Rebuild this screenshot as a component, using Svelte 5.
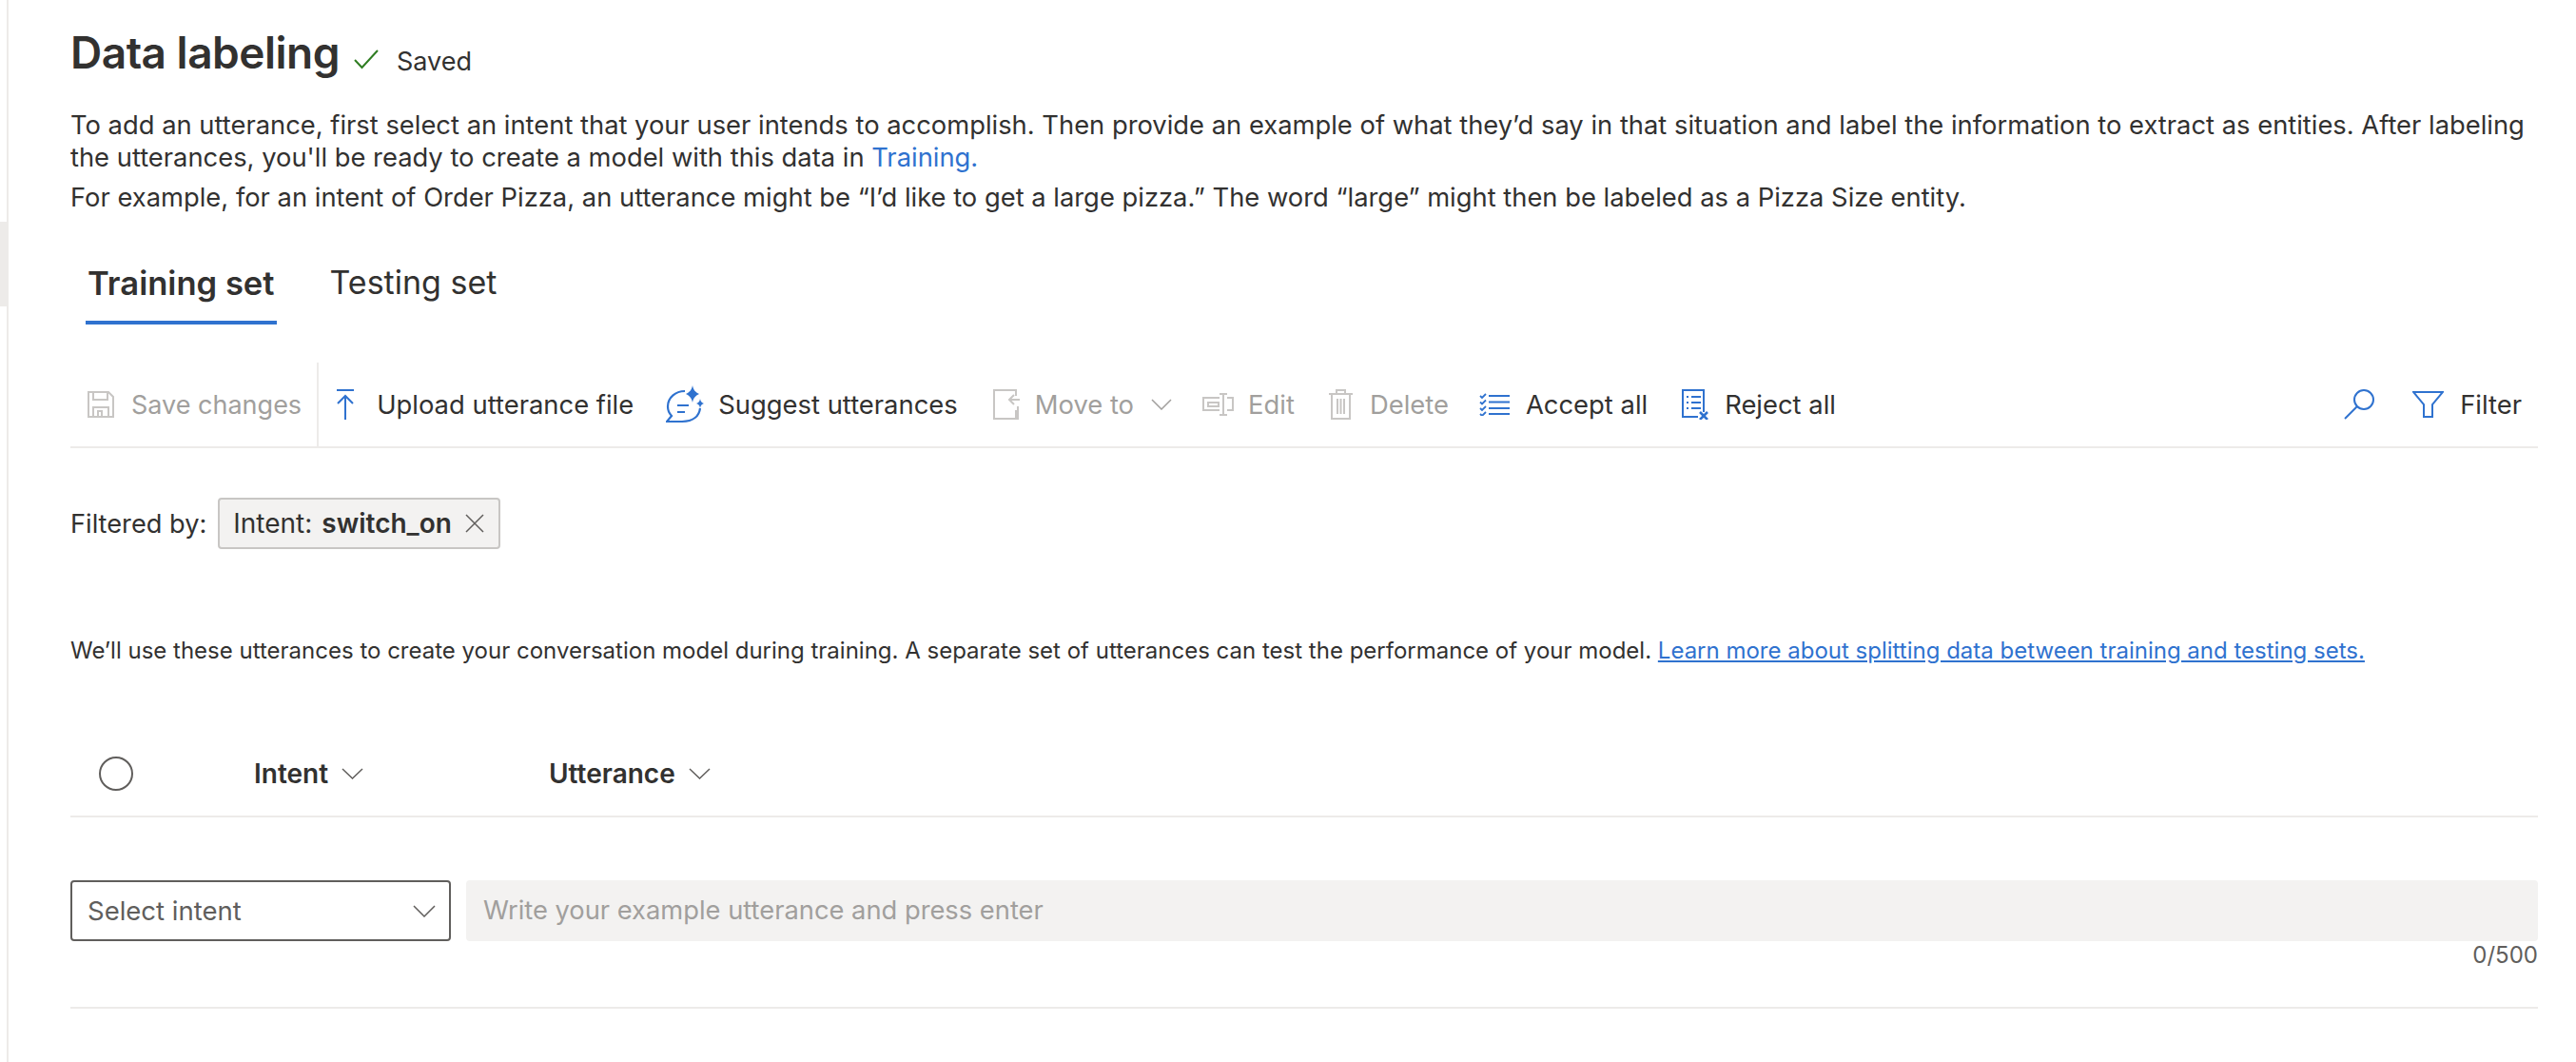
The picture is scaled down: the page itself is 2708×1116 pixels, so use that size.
<script lang="ts">
  const headline = 'To add an utterance, first select an intent that your user intends to accomplish. Then provide an example of what they’d say in that situation and label the information to extract as entities. After labeling the utterances, you\'ll be ready to create a model with this data in ';
  const example = 'For example, for an intent of Order Pizza, an utterance might be “I’d like to get a large pizza.” The word “large” might then be labeled as a Pizza Size entity.';
</script>

<div class="page">
  <aside class="rail"><div class="rail-mark"></div></aside>

  <main class="content">
    <header class="title-row">
      <h1>Data labeling</h1>
      <svg class="check" width="26" height="22" viewBox="0 0 26 22" fill="none"><path d="M1 12L8.5 20L25 2" stroke="#2f7d22" stroke-width="2"/></svg>
      <span class="saved">Saved</span>
    </header>

    <p class="intro">{headline}<a href="#training">Training.</a></p>
    <p class="intro second">{example}</p>

    <nav class="tabs">
      <div class="tab active">Training set</div>
      <div class="tab">Testing set</div>
    </nav>

    <div class="toolbar">
      <div class="btn disabled save">
        <svg width="28" height="28" viewBox="0 0 28 28" fill="none" stroke="#c8c6c4" stroke-width="2"><path d="M1 1H22L27 6V27H1Z"/><path d="M6 1V9H21V1"/><path d="M6 27V17H22V27"/><path d="M11 27V21H15V27"/></svg>
        <span>Save changes</span>
      </div>
      <div class="btn upload">
        <svg width="18" height="32" viewBox="0 0 18 32" fill="none" stroke="#2f72cf" stroke-width="2"><path d="M0 1H18"/><path d="M9 32V8"/><path d="M1 15L9 7L17 15"/></svg>
        <span>Upload utterance file</span>
      </div>
      <div class="btn suggest">
        <svg width="40" height="40" viewBox="0 0 40 40" fill="none"><path d="M20 6C10 6 2 13 2 22C2 26 3 29 6 32L1 38H17C29 38 35 32 36 24" stroke="#2f72cf" stroke-width="2.2"/><path d="M12 21H24M12 28H20" stroke="#2f72cf" stroke-width="2.2"/><path d="M28 0C29 5 31 7 35 9C31 11 29 13 28 18C27 13 25 11 21 9C25 7 27 5 28 0Z" fill="#2f72cf"/><path d="M36 14C36.500 17 37.500 18 40 19C37.500 20 36.500 21 36 24C35.500 21 34.500 20 32 19C34.500 18 35.500 17 36 14Z" fill="#2f72cf"/></svg>
        <span>Suggest utterances</span>
      </div>
      <div class="btn disabled move">
        <svg width="28" height="32" viewBox="0 0 28 32" fill="none" stroke="#c8c6c4" stroke-width="2"><path d="M24 7V1H1V31H26V18"/><path d="M28 11H18M22 6L17 11L22 16"/><path d="M24 22V31"/></svg>
        <span>Move to</span>
        <svg class="chev" width="22" height="12" viewBox="0 0 22 12" fill="none" stroke="#a19f9d" stroke-width="1.500"><path d="M1 1L11 11L21 1"/></svg>
      </div>
      <div class="btn disabled edit">
        <svg width="33" height="24" viewBox="0 0 33 24" fill="none" stroke="#c8c6c4" stroke-width="2"><path d="M18 5H1V18H18"/><path d="M6 10H17V14H6Z"/><path d="M26 5H32V18H26"/><path d="M18 1H26M22 1V23M18 23H26"/></svg>
        <span>Edit</span>
      </div>
      <div class="btn disabled delete">
        <svg width="25" height="32" viewBox="0 0 25 32" fill="none" stroke="#c8c6c4" stroke-width="2"><path d="M0 5H25"/><path d="M8 5V1H17V5"/><path d="M3 5V31H22V5"/><path d="M9 10V26M12.500 10V26M16 10V26"/></svg>
        <span>Delete</span>
      </div>
      <div class="btn accept">
        <svg width="32" height="24" viewBox="0 0 32 24" fill="none" stroke="#2f72cf"><path d="M1 3L3 5L7 1M1 9.500L3 11.500L7 7.500M1 16L3 18L7 14M1 22L3 24L7 20" stroke-width="1.800"/><path d="M10 3H32M10 9.500H32M10 16H32M10 22H32" stroke-width="2"/></svg>
        <span>Accept all</span>
      </div>
      <div class="btn reject">
        <svg width="28" height="32" viewBox="0 0 28 32" fill="none" stroke="#2f72cf"><path d="M23 24V1H1V29H17" stroke-width="2"/><path d="M5 8H7M10 8H20M5 14H7M10 14H20M5 20H7M10 20H20" stroke-width="2"/><path d="M19 24L27 32M27 24L19 32" stroke-width="2.600"/></svg>
        <span>Reject all</span>
      </div>
      <div class="spacer"></div>
      <div class="btn search">
        <svg width="32" height="32" viewBox="0 0 32 32" fill="none" stroke="#2f72cf" stroke-width="2"><circle cx="21" cy="11" r="10"/><path d="M14 18L1 31"/></svg>
      </div>
      <div class="btn filter">
        <svg width="33" height="28" viewBox="0 0 33 28" fill="none" stroke="#2f72cf" stroke-width="2"><path d="M1 1H32L21 14V27H12V14Z"/></svg>
        <span>Filter</span>
      </div>
    </div>

    <div class="filters">
      <span>Filtered by:</span>
      <div class="chip">
        <span>Intent:</span><b>switch_on</b>
        <svg width="20" height="20" viewBox="0 0 20 20" fill="none" stroke="#605e5c" stroke-width="1.500"><path d="M1 1L19 19M19 1L1 19"/></svg>
      </div>
    </div>

    <p class="note">We’ll use these utterances to create your conversation model during training. A separate set of utterances can test the performance of your model. <a href="#learn">Learn more about splitting data between training and testing sets.</a></p>

    <div class="table-head">
      <div class="radio"></div>
      <div class="col intent">Intent
        <svg width="23" height="12" viewBox="0 0 23 12" fill="none" stroke="#605e5c" stroke-width="1.500"><path d="M1 1L11.500 11L22 1"/></svg>
      </div>
      <div class="col">Utterance
        <svg width="23" height="12" viewBox="0 0 23 12" fill="none" stroke="#605e5c" stroke-width="1.500"><path d="M1 1L11.500 11L22 1"/></svg>
      </div>
    </div>

    <div class="entry">
      <div class="select">
        <span>Select intent</span>
        <svg width="24" height="13" viewBox="0 0 24 13" fill="none" stroke="#605e5c" stroke-width="1.500"><path d="M1 1L12 12L23 1"/></svg>
      </div>
      <div class="utterance">Write your example utterance and press enter</div>
    </div>
    <div class="counter">0/500</div>
  </main>
</div>

<style>
  :global(body) {
    margin: 0;
    background: #fff;
  }

  .page {
    display: flex;
    width: 2708px;
    height: 1116px;
    overflow: hidden;
    font-family: Inter, "Noto Sans", sans-serif;
    color: #323130;
  }

  .rail {
    width: 9px;
    flex: none;
    box-sizing: border-box;
    border-right: 2px solid #edebe9;
    padding-top: 233px;
  }

  .rail-mark {
    height: 89px;
    background: #edebe9;
  }

  .content {
    flex: none;
    width: 2594px;
    margin-left: 65px;
  }

  .title-row {
    display: flex;
    align-items: center;
    height: 56px;
    margin-top: 27px;
  }

  h1 {
    margin: 0;
    font-size: 46px;
    line-height: 56px;
    font-weight: 600;
    letter-spacing: -0.5px;
  }

  .check {
    margin: 14px 0 0 15px;
  }

  .saved {
    margin: 18px 0 0 19px;
    font-size: 27px;
  }

  .intro {
    margin: 32px 0 0;
    font-size: 27.35px;
    line-height: 34px;
  }

  .intro.second {
    margin-top: 8px;
  }

  a {
    color: #2f72cf;
    text-decoration: none;
  }

  .tabs {
    display: flex;
    gap: 56px;
    margin-top: 37px;
    padding-left: 18px;
  }

  .tab {
    height: 79px;
    line-height: 70px;
    font-size: 34px;
    box-sizing: border-box;
  }

  .tab.active {
    font-size: 34.6px;
    font-weight: 600;
    border-bottom: 4px solid #2f72cf;
    margin-left: -2px;
    padding: 0 2px;
  }

  .toolbar {
    display: flex;
    align-items: center;
    height: 88px;
    margin-top: 40px;
    border-bottom: 2px solid #edebe9;
    font-size: 27.4px;
  }

  .btn {
    display: flex;
    align-items: center;
    gap: 17px;
  }

  .btn.disabled {
    color: #a19f9d;
  }

  .save {
    margin-left: 18px;
    height: 100%;
    padding-right: 16px;
    border-right: 2px solid #edebe9;
    font-size: 27px;
    gap: 18px;
  }

  .upload { margin-left: 19px; gap: 24px; }
  .suggest { margin-left: 34px; gap: 15px; }
  .move { margin-left: 37px; gap: 16px; }
  .move .chev { margin-left: 2px; }
  .edit { margin-left: 32px; gap: 15px; }
  .delete { margin-left: 36px; gap: 18px; }
  .accept { margin-left: 32px; }
  .reject { margin-left: 36px; }
  .spacer { flex: 1; }
  .search { margin-right: 40px; }
  .filter { margin-right: 17px; }

  .filters {
    display: flex;
    align-items: center;
    gap: 12px;
    margin-top: 52px;
    font-size: 27.2px;
  }

  .chip {
    display: flex;
    align-items: center;
    height: 54px;
    box-sizing: border-box;
    padding: 0 15px 0 14px;
    gap: 10px;
    background: #f3f2f1;
    border: 2px solid #c8c6c4;
    border-radius: 4px;
    font-size: 28px;
  }

  .chip b {
    font-weight: 600;
    margin-right: 4px;
  }

  .note {
    margin: 91px 0 0;
    font-size: 24px;
    line-height: 32px;
  }

  .note a {
    text-decoration: underline;
  }

  .table-head {
    display: flex;
    align-items: center;
    height: 88px;
    margin-top: 69px;
    border-bottom: 2px solid #edebe9;
    font-size: 28px;
    font-weight: 600;
  }

  .radio {
    width: 36px;
    height: 36px;
    box-sizing: border-box;
    margin-left: 30px;
    border: 2px solid #605e5c;
    border-radius: 50%;
  }

  .col {
    display: flex;
    align-items: center;
    gap: 14px;
  }

  .col.intent {
    margin-left: 127px;
    width: 310px;
  }

  .entry {
    display: flex;
    gap: 16px;
    margin-top: 66px;
    font-size: 27.5px;
  }

  .select {
    display: flex;
    align-items: center;
    justify-content: space-between;
    width: 400px;
    height: 64px;
    box-sizing: border-box;
    padding: 0 14px 0 16px;
    border: 2px solid #605e5c;
    border-radius: 4px;
    color: #605e5c;
    flex: none;
  }

  .utterance {
    flex: 1;
    height: 64px;
    line-height: 64px;
    padding-left: 18px;
    background: #f3f2f1;
    border-radius: 4px;
    color: #a19f9d;
    font-size: 27.3px;
  }

  .counter {
    text-align: right;
    font-size: 24px;
    line-height: 30px;
    color: #605e5c;
    height: 69px;
    border-bottom: 2px solid #edebe9;
  }
</style>
